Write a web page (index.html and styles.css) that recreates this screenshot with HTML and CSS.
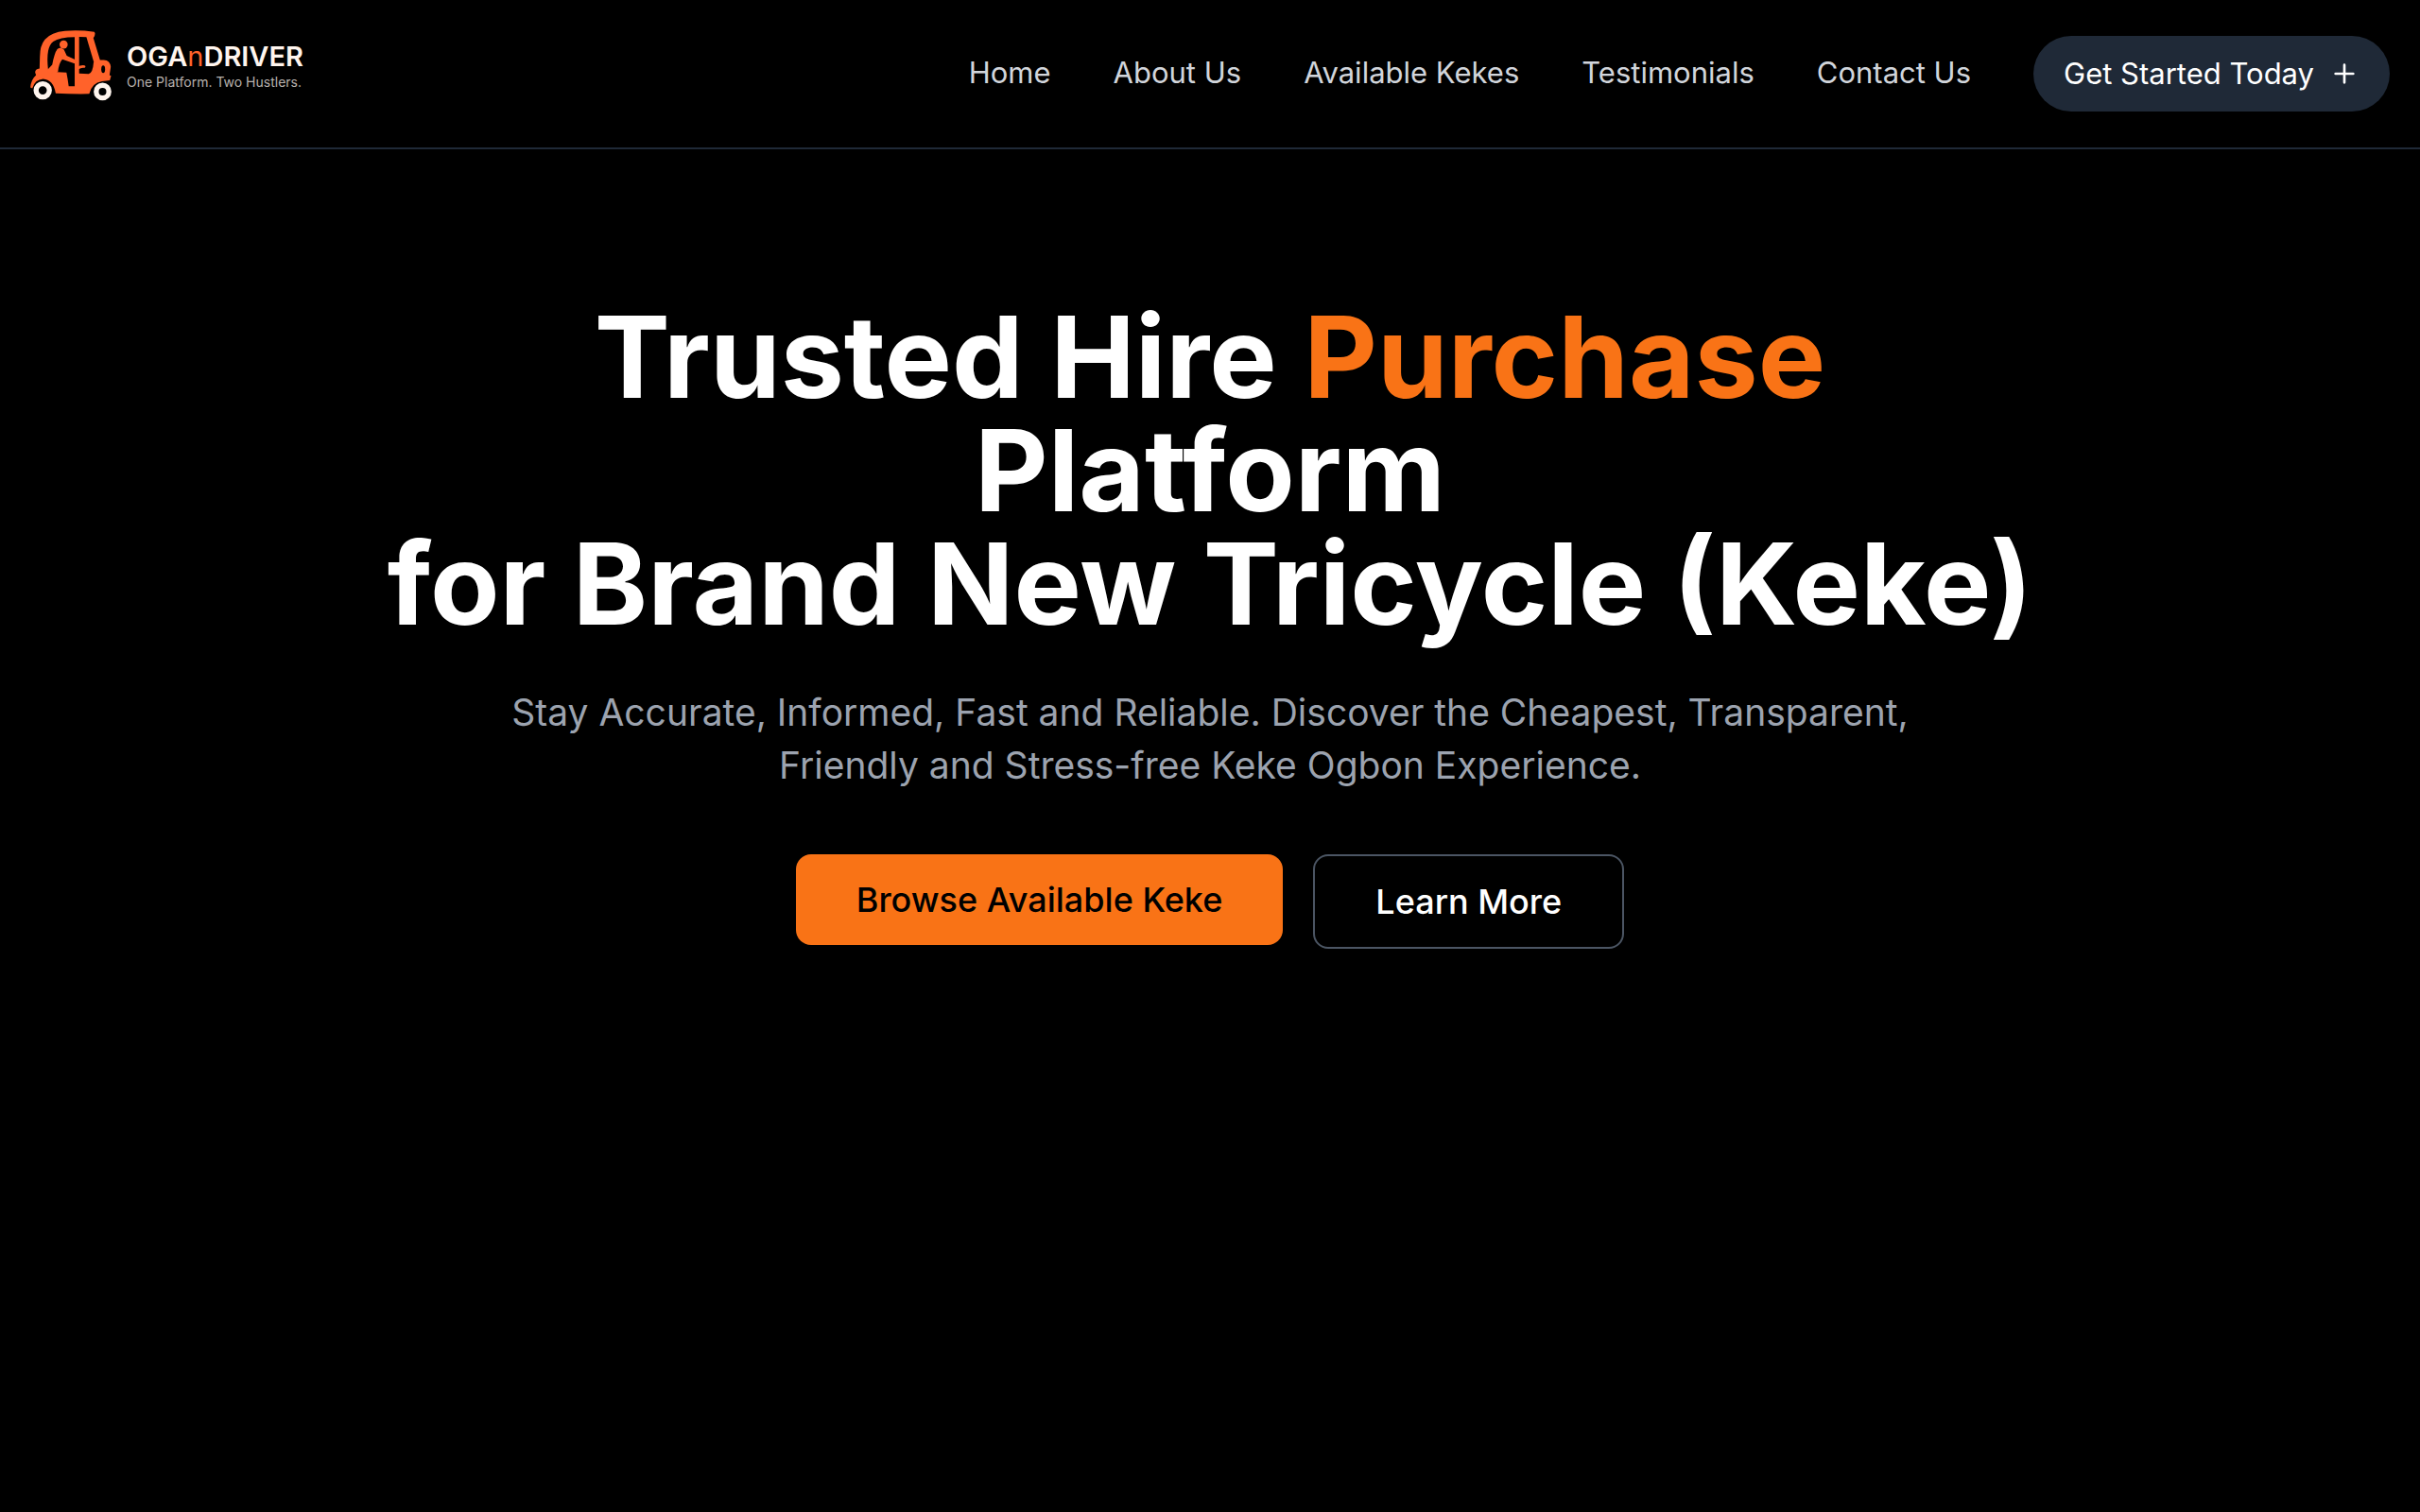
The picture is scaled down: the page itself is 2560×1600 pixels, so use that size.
FILE: index.html
```html
<!DOCTYPE html>
<html lang="en">
<head>
  <meta charset="UTF-8" />
  <meta name="viewport" content="width=device-width, initial-scale=1.0"/>
  <title>OGAnDRIVER - One Platform. Two Hustlers.</title>
  <link rel="stylesheet" href="styles.css">
</head>
<body>

<header class="header">
  <a href="#" class="logo">
    <svg class="logo-icon" viewBox="36 36 256 224" aria-hidden="true">
      <!-- body -->
      <path fill="#ff622a" d="M238 41 Q190 34 145 38 Q102 42 82 65 Q66 84 66 120 L65 157 Q51 158 51 170 L54 178 Q38 192 36 217 L42 220 Q50 192 76 190 Q108 192 116 235 Q170 238 222 237 Q230 202 262 197 Q276 196 287 194 L291 180 L286 178 L290 152 Q288 131 268 130 L256 130 L235 61 Q241 54 240 45 Z"/>
      <!-- windows and doorway -->
      <path fill="#000" d="M92 160 Q84 90 108 72 Q128 58 176 58 V213 H157 Q154 190 150 170 L121 168 Z"/>
      <path fill="#000" d="M190 57 L213 58 L236 135 Q233 172 220 174 L190 173 Z"/>
      <ellipse cx="266" cy="159" rx="6" ry="12" fill="#000"/>
      <!-- driver -->
      <circle cx="141" cy="81" r="13" fill="#ff622a"/>
      <path fill="#ff622a" d="M88 163 L105 145 Q112 108 121 96 Q131 88 142 97 L151 117 L180 130 V143 L137 128 Q126 140 123 168 L95 172 Z"/>
      <path stroke="#ff622a" stroke-width="8" stroke-linecap="round" fill="none" d="M184 157 Q197 149 206 151"/>
      <!-- wheels -->
      <circle cx="75" cy="226" r="21" fill="#000" stroke="#fff5ee" stroke-width="16"/>
      <circle cx="264" cy="230" r="20" fill="#000" stroke="#fff5ee" stroke-width="16"/>
    </svg>
    <span class="logo-text">
      <span class="logo-name">OGA<span class="logo-n">n</span>DRIVER</span>
      <span class="logo-tagline">One Platform. Two Hustlers.</span>
    </span>
  </a>

  <nav class="nav">
    <a href="#home">Home</a>
    <a href="#about">About Us</a>
    <a href="#kekes">Available Kekes</a>
    <a href="#testimonials">Testimonials</a>
    <a href="#contact">Contact Us</a>
    <button class="btn-start" type="button">
      Get Started Today
      <svg class="icon" viewBox="0 0 24 24" aria-hidden="true"><path d="M5 12h14M12 5v14"/></svg>
    </button>
  </nav>
</header>

<main class="hero" id="home">
  <h1>Trusted Hire <span class="highlight">Purchase</span> Platform<br>for Brand New Tricycle (Keke)</h1>
  <p>Stay Accurate, Informed, Fast and Reliable. Discover the Cheapest, Transparent, Friendly and Stress-free Keke Ogbon Experience.</p>
  <div class="hero-buttons">
    <button class="btn btn-primary" type="button">Browse Available Keke</button>
    <button class="btn btn-outline" type="button">Learn More</button>
  </div>
</main>

</body>
</html>
```
FILE: styles.css
```css
* {
  box-sizing: border-box;
}
body {
  font-family: Inter, sans-serif;
  background: #000;
  color: #fff;
  margin: 0;
}
a {
  color: inherit;
  text-decoration: none;
}
button {
  font-family: inherit;
  border: none;
  cursor: pointer;
}
.header {
  display: flex;
  justify-content: space-between;
  align-items: center;
  padding: 32px;
  border-bottom: 2px solid #1f2937;
}
.logo {
  display: flex;
  align-items: flex-start;
  gap: 16px;
  height: 92px;
}
.logo-icon {
  width: 86px;
  height: 75px;
}
.logo-text {
  display: flex;
  flex-direction: column;
  padding-top: 12px;
}
.logo-name {
  font-size: 29px;
  font-weight: 600;
  line-height: 32px;
  color: #fff5ee;
}
.logo-n {
  font-weight: 400;
  color: #ff622a;
}
.logo-tagline {
  font-size: 14px;
  line-height: 22px;
  color: #b8b2ae;
}
.nav {
  display: flex;
  align-items: center;
  gap: 66px;
  font-size: 31px;
  line-height: 48px;
  color: #d1d5db;
}
.nav a {
  padding-bottom: 2px;
}
.btn-start {
  display: flex;
  align-items: center;
  gap: 16px;
  padding: 16px 32px;
  border-radius: 40px;
  background: #1f2937;
  color: #fff;
  font-size: 31px;
  line-height: 48px;
}
.icon {
  width: 32px;
  height: 32px;
  fill: none;
  stroke: currentColor;
  stroke-width: 2;
  stroke-linecap: round;
}
.hero {
  max-width: 1792px;
  margin: 0 auto;
  padding: 160px 0;
  text-align: center;
}
h1 {
  margin: 0 0 48px;
  font-size: 120px;
  font-weight: 700;
  line-height: 120px;
}
.highlight {
  color: #f97316;
}
.hero p {
  max-width: 1536px;
  margin: 0 auto 66px;
  font-size: 39px;
  line-height: 56px;
  color: #9ca3af;
}
.hero-buttons {
  display: flex;
  justify-content: center;
  align-items: flex-start;
  gap: 32px;
}
.btn {
  padding: 20px 64px;
  border-radius: 16px;
  font-size: 36px;
  font-weight: 500;
  line-height: 56px;
}
.btn-primary {
  background: #f97316;
  color: #000;
}
.btn-outline {
  background: transparent;
  border: 2px solid #4b5563;
  color: #fff;
}
```
